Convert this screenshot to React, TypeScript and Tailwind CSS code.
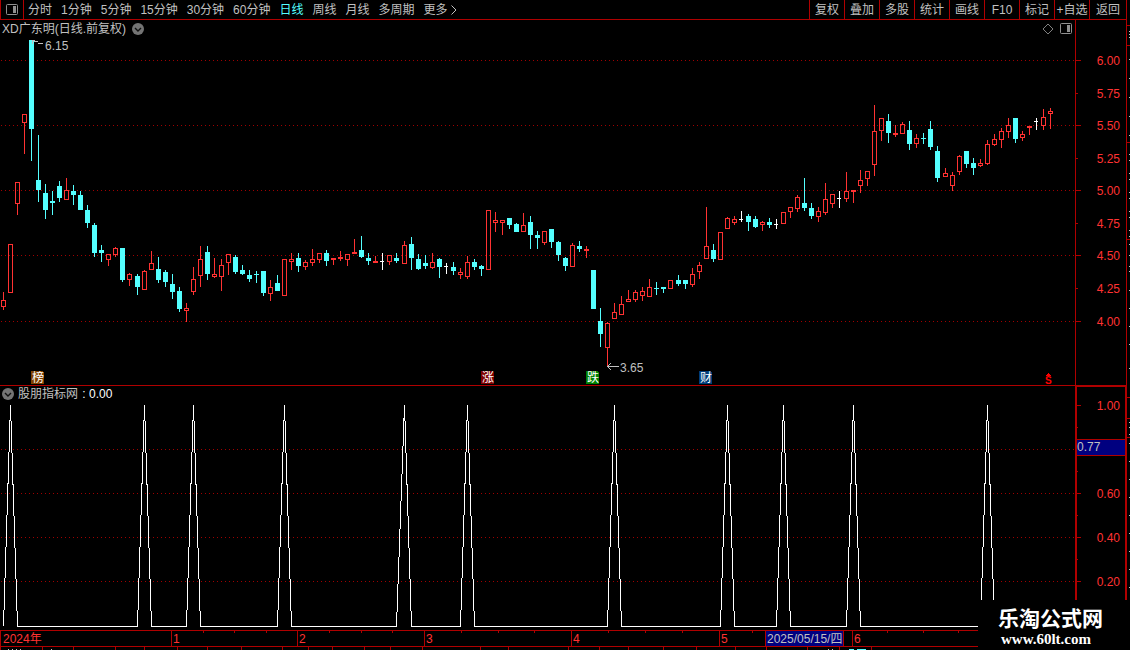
import React, { useState } from 'react';

type Kind = 'up' | 'down' | 'flat';
type Candle = [high: number, top: number, bottom: number, low: number, kind: Kind];

const U: Kind = 'up';
const D: Kind = 'down';
const F: Kind = 'flat';

const PERIODS = ['分时', '1分钟', '5分钟', '15分钟', '30分钟', '60分钟', '日线', '周线', '月线', '多周期'];
const TOOLS = ['复权', '叠加', '多股', '统计', '画线', 'F10', '标记', '+自选', '返回'];

// high, body top, body bottom, low (chart y)
const CANDLES: Candle[] = [
  [292, 300, 307, 310, U], [244, 244, 293, 293, U], [182, 182, 204, 215, U], [114, 114, 123, 154, U],
  [40, 40, 129, 161, D], [135, 180, 190, 202, D], [184, 193, 210, 219, D], [191, 201, 203, 215, D],
  [181, 186, 198, 202, D], [178, 190, 200, 200, U], [185, 191, 195, 205, D], [191, 195, 210, 210, D],
  [205, 210, 223, 228, D], [223, 225, 253, 257, D], [245, 250, 253, 262, D], [254, 254, 260, 266, U],
  [247, 248, 255, 257, U], [248, 248, 280, 282, D], [273, 274, 280, 286, U], [274, 276, 287, 295, D],
  [270, 271, 290, 290, U], [251, 263, 270, 270, U], [257, 269, 280, 283, D], [270, 272, 282, 287, D],
  [274, 284, 292, 299, D], [287, 291, 309, 312, D], [303, 308, 311, 322, U], [267, 279, 292, 295, U],
  [246, 259, 276, 287, U], [246, 252, 274, 280, D], [258, 274, 277, 278, U], [259, 265, 277, 291, U],
  [254, 254, 263, 275, U], [255, 257, 272, 274, D], [265, 270, 274, 275, D], [270, 275, 279, 282, D],
  [271, 274, 275, 283, D], [271, 271, 293, 296, D], [280, 287, 294, 301, U], [275, 283, 291, 291, D],
  [259, 259, 296, 296, U], [253, 259, 262, 270, U], [253, 258, 266, 272, D], [260, 262, 267, 270, U],
  [249, 259, 263, 266, U], [253, 253, 260, 263, U], [250, 253, 261, 266, D], [258, 258, 260, 265, U],
  [251, 257, 259, 261, U], [254, 254, 260, 266, U], [239, 252, 254, 254, U], [236, 250, 257, 258, D],
  [253, 258, 261, 265, D], [256, 261, 263, 263, U], [253, 261, 262, 270, F], [255, 255, 262, 265, U],
  [253, 258, 261, 263, D], [241, 245, 264, 264, U], [237, 244, 258, 270, D], [254, 259, 269, 270, D],
  [255, 263, 266, 269, D], [253, 262, 268, 269, U], [258, 259, 267, 278, D], [263, 266, 267, 274, F],
  [262, 267, 271, 275, D], [268, 272, 275, 279, U], [256, 262, 277, 279, U], [259, 262, 267, 270, D],
  [265, 266, 269, 276, D], [210, 210, 270, 270, U], [212, 220, 223, 232, U], [220, 220, 223, 235, U],
  [218, 218, 225, 229, D], [223, 224, 232, 232, D], [213, 225, 232, 232, U], [216, 222, 235, 249, D],
  [231, 235, 238, 249, D], [231, 231, 243, 245, U], [229, 229, 242, 248, D], [241, 242, 255, 261, D],
  [257, 258, 266, 271, D], [243, 245, 267, 267, U], [241, 246, 249, 252, D], [246, 249, 251, 258, U],
  [270, 270, 309, 309, D], [308, 321, 334, 347, D], [322, 323, 348, 366, U], [303, 312, 319, 319, U],
  [296, 304, 315, 315, U], [290, 299, 302, 302, U], [290, 292, 300, 302, U], [287, 291, 296, 301, U],
  [279, 287, 297, 297, U], [282, 288, 289, 295, D], [287, 287, 289, 293, D], [280, 280, 289, 289, U],
  [275, 280, 284, 286, D], [280, 280, 284, 289, D], [268, 274, 285, 287, U], [262, 265, 272, 279, U],
  [207, 246, 259, 259, U], [244, 250, 259, 262, D], [232, 232, 260, 260, U], [217, 218, 229, 229, U],
  [216, 219, 223, 225, U], [211, 219, 220, 222, F], [214, 216, 222, 231, D], [216, 219, 227, 228, D],
  [221, 222, 225, 231, U], [218, 222, 225, 228, D], [219, 224, 225, 229, F], [212, 212, 224, 224, U],
  [207, 207, 212, 218, U], [195, 197, 209, 212, U], [178, 203, 208, 211, D], [203, 208, 216, 219, D],
  [207, 211, 217, 222, U], [183, 199, 213, 215, U], [194, 194, 204, 208, U], [191, 198, 199, 208, F],
  [172, 191, 199, 202, U], [190, 190, 192, 203, U], [170, 180, 186, 193, U], [171, 171, 179, 186, U],
  [105, 131, 165, 176, U], [118, 118, 131, 141, U], [114, 121, 133, 143, D], [125, 133, 135, 137, U],
  [122, 124, 134, 134, U], [121, 130, 144, 150, D], [134, 138, 144, 148, U], [133, 138, 139, 144, D],
  [121, 129, 147, 150, D], [146, 151, 178, 182, D], [168, 173, 177, 177, U], [172, 175, 186, 191, U],
  [155, 156, 172, 175, U], [151, 151, 164, 168, D], [158, 163, 168, 175, D], [159, 163, 166, 167, U],
  [140, 144, 164, 165, U], [134, 139, 145, 146, U], [128, 131, 140, 148, U], [118, 125, 132, 138, U],
  [118, 118, 139, 143, D], [131, 134, 138, 141, U], [126, 126, 128, 135, U], [118, 121, 122, 130, F],
  [109, 117, 126, 130, U], [108, 111, 114, 129, U],
];

// bars on which the indicator fires
const SIGNALS = [1, 20, 27, 40, 57, 66, 87, 103, 111, 121, 140];

const PRICE_TICKS = [
  { y: 60, label: '6.00' }, { y: 93, label: '5.75' }, { y: 125, label: '5.50' },
  { y: 158, label: '5.25' }, { y: 190, label: '5.00' }, { y: 223, label: '4.75' },
  { y: 255, label: '4.50' }, { y: 288, label: '4.25' }, { y: 321, label: '4.00' },
];

const SIGNAL_TICKS = [
  { y: 405, label: '1.00' }, { y: 449, label: '' }, { y: 493, label: '0.60' },
  { y: 537, label: '0.40' }, { y: 581, label: '0.20' },
];

const BADGES = [
  { x: 31, text: '榜', color: '#804000' },
  { x: 481, text: '涨', color: '#800000' },
  { x: 586, text: '跌', color: '#008000' },
  { x: 699, text: '财', color: '#003c78' },
];

const MONTHS = [
  { x: 171, label: '1' }, { x: 297, label: '2' }, { x: 424, label: '3' },
  { x: 571, label: '4' }, { x: 719, label: '5' }, { x: 852, label: '6' },
];
const WEEKS = [203, 234, 266, 329, 361, 392, 461, 498, 534, 608, 645, 682, 752, 887, 923, 958];

const FOOT_TABS = [
  0, 42, 73, 115, 144, 177, 207, 241, 282, 308, 332, 364, 390, 422, 480, 508, 568, 599, 628, 663,
  696, 735, 766, 807, 839, 871,
];
const FOOT_MARKS = [8, 12, 16, 20, 51, 828, 832];

const EDGE_LINES = [25, 45, 142, 239, 397, 418, 437];
const EDGE_MARKS = [
  31, 34, 37, 59, 78, 97, 116, 135, 154, 160, 173, 179, 192, 198, 211, 217, 230, 236, 244, 255, 266,
  271, 290, 308, 326, 344, 368, 422, 427, 434, 443, 461, 479, 497, 515, 533, 551, 569, 587,
];

const barX = (i: number) => 3 + 7 * i + Math.floor((3 * i + 59) / 115);

const COLORS: Record<Kind, string> = { up: '#ff3232', down: '#54ffff', flat: '#ffffff' };

function CandleBar({ index, candle }: { index: number; candle: Candle }) {
  const [high, top, bottom, low, kind] = candle;
  const x = barX(index);
  const color = COLORS[kind];
  const hollow = kind === 'up' && bottom - top > 2;

  return (
    <g fill={color}>
      <rect x={x} y={high} width={1} height={top - high} />
      <rect x={x} y={bottom} width={1} height={low - bottom} />
      {hollow ? (
        <rect x={x - 1.5} y={top + 0.5} width={4} height={bottom - top - 1} fill="none" stroke={color} />
      ) : (
        <rect x={x - 2} y={top} width={kind === 'flat' ? 4 : 5} height={bottom - top} />
      )}
    </g>
  );
}

function GridLine({ y }: { y: number }) {
  return <line x1="1" x2="100%" y1={y + 0.5} y2={y + 0.5} stroke="#a00000" strokeDasharray="1 3" />;
}

function PanelIcon() {
  return (
    <svg width="13" height="12" viewBox="0 0 13 12" fill="none">
      <rect x="0.5" y="0.5" width="11" height="10" rx="1" stroke="#909090" />
      <rect x="7" y="2" width="3" height="7" fill="#909090" />
    </svg>
  );
}

function CollapseIcon() {
  return (
    <svg width="12" height="12" viewBox="0 0 12 12" fill="none">
      <circle cx="6" cy="6" r="6" fill="#747474" />
      <path d="M3 5l3 3 3-3" stroke="#101010" strokeWidth="1.4" />
    </svg>
  );
}

function Toolbar() {
  const [period, setPeriod] = useState('日线');

  return (
    <header className="flex h-5 items-stretch border-x border-b border-[#b00000] leading-[18px]">
      <button aria-label="侧栏" className="flex w-[22px] items-center justify-center">
        <PanelIcon />
      </button>
      <nav className="flex flex-1 items-stretch gap-[9px] border-l border-[#b00000] pl-1">
        {PERIODS.map((item) => (
          <button
            key={item}
            onClick={() => setPeriod(item)}
            className={item === period ? 'whitespace-nowrap text-[#54ffff]' : 'whitespace-nowrap'}
          >
            {item}
          </button>
        ))}
        <button className="flex items-center gap-[3px] whitespace-nowrap">
          更多
          <svg width="6" height="10" viewBox="0 0 6 10" fill="none">
            <path d="M0.5 0.5L5 5L0.5 9.5" stroke="#c0c0c0" />
          </svg>
        </button>
      </nav>
      <div className="flex items-stretch">
        {TOOLS.map((tool) => (
          <button
            key={tool}
            className="w-[35px] whitespace-nowrap border-l border-[#b00000] text-center last:w-[37px]"
          >
            {tool}
          </button>
        ))}
      </div>
    </header>
  );
}

function PricePanel() {
  return (
    <section className="flex h-[366px]">
      <div className="relative min-w-0 flex-1 border-b border-[#b00000]">
        <svg className="block h-[365px] w-full text-xs" shapeRendering="crispEdges">
          <g transform="translate(0 -20)">
            {PRICE_TICKS.filter((_, i) => i % 2 === 0).map((tick) => (
              <GridLine key={tick.y} y={tick.y} />
            ))}
            {CANDLES.map((candle, i) => (
              <CandleBar key={i} index={i} candle={candle} />
            ))}

            {/* highest and lowest price */}
            <path d="M32 40.5h3M32.5 40v4M34 41.5h4M38 43.5h5" stroke="#c0c0c0" fill="none" />
            <text x="45" y="50" fill="#c0c0c0">6.15</text>
            <path d="M607 366.5h12M608 366l3-3M608 367l3 3" stroke="#c0c0c0" fill="none" />
            <text x="620" y="372" fill="#c0c0c0">3.65</text>

            {BADGES.map((badge) => (
              <g key={badge.text}>
                <path d={`M${badge.x} 371h11l2 2v11h-13z`} fill={badge.color} />
                <text x={badge.x + 1} y="382" fill="#ffffff">{badge.text}</text>
              </g>
            ))}
            <path d="M1048 373h1v1h1v1h1v1h-5v-1h1v-1h1z" fill="#ff0000" />
            <text x="1045" y="384" fill="#ff0000" className="text-[10px] font-bold">S</text>
          </g>
        </svg>
        <div className="absolute inset-x-0 top-0 flex h-[18px] items-center justify-between px-[2px]">
          <div className="flex items-center gap-[6px]">
            <h1 className="whitespace-nowrap">XD广东明(日线.前复权)</h1>
            <button aria-label="展开">
              <CollapseIcon />
            </button>
          </div>
          <div className="flex items-center gap-[6px]">
            <button aria-label="标注">
              <svg width="12" height="12" viewBox="0 0 12 12" fill="none">
                <path d="M6 1l5 5-5 5-5-5z" stroke="#808080" />
              </svg>
            </button>
            <button aria-label="窗口">
              <PanelIcon />
            </button>
          </div>
        </div>
      </div>
      <div className="w-[52px] border-x border-b border-[#b00000]">
        <svg className="block h-[365px] w-full text-xs" shapeRendering="crispEdges">
          <g transform="translate(0 -20)">
            {PRICE_TICKS.map((tick, i) => (
              <g key={tick.label}>
                <rect y={tick.y} width={i % 2 === 0 ? 5 : 2} height="1" fill="#b00000" />
                <text x="44" y={tick.y + 5} textAnchor="end" fill="#ff3232">{tick.label}</text>
              </g>
            ))}
          </g>
        </svg>
      </div>
    </section>
  );
}

function SignalPanel() {
  const points = CANDLES.map((_, i) => `${barX(i) + 0.5},${SIGNALS.includes(i) ? 405 : 626.5}`).join(' ');

  return (
    <section className="flex h-[244px]">
      <div className="relative min-w-0 flex-1">
        <svg className="block h-full w-full" shapeRendering="crispEdges">
          <g transform="translate(0 -386)">
            {SIGNAL_TICKS.slice(1).map((tick) => (
              <GridLine key={tick.y} y={tick.y} />
            ))}
            <polyline points={points} fill="none" stroke="#ffffff" strokeLinejoin="bevel" />
          </g>
        </svg>
        <div className="absolute left-0 top-0 flex h-4 items-center gap-1 pl-[2px]">
          <button aria-label="收起">
            <CollapseIcon />
          </button>
          <h2 className="whitespace-nowrap">
            股朋指标网 <span className="pl-px text-white">: 0.00</span>
          </h2>
        </div>
      </div>
      <div className="relative w-[52px] border-x-2 border-t border-[#b00000]">
        <svg className="block h-full w-full text-xs" shapeRendering="crispEdges">
          <g transform="translate(0 -387)">
            {SIGNAL_TICKS.map((tick) => (
              <g key={tick.y}>
                <rect y={tick.y} width="4" height="1" fill="#b00000" />
                <rect y={tick.y + 22} width="1" height="1" fill="#b00000" />
                <text x="43" y={tick.y + 5} textAnchor="end" fill="#ff3232">{tick.label}</text>
              </g>
            ))}
          </g>
        </svg>
        <output className="absolute inset-x-0 top-[52px] h-[17px] border-y border-[#b00000] bg-[#000080] leading-[15px]">
          0.77
        </output>
      </div>
    </section>
  );
}

function TimeAxis() {
  return (
    <div className="h-[17px] border-y border-l border-[#b00000]">
      <svg className="block h-[15px] w-full text-xs" shapeRendering="crispEdges">
        <g transform="translate(-1 0)">
          <text x="3" y="12" fill="#ff3232">2024年</text>
          {WEEKS.map((x) => (
            <rect key={x} x={x} width="1" height="2" fill="#b00000" />
          ))}
          {MONTHS.map((month) => (
            <g key={month.x}>
              <rect x={month.x} width="1" height="15" fill="#b00000" />
              <text x={month.x + 2} y="12" fill="#ff3232">{month.label}</text>
            </g>
          ))}
          <rect x="765" width="79" height="15" fill="#b00000" />
          <rect x="766" width="77" height="15" fill="#000080" />
          <text x="767" y="12" fill="#c0c0c0">2025/05/15/四</text>
        </g>
      </svg>
    </div>
  );
}

export default function App() {
  return (
    <div className="relative flex min-h-screen bg-black font-['Liberation_Sans','Noto_Sans_CJK_SC',sans-serif] text-xs leading-4 text-[#c0c0c0]">
      <main className="min-w-0 flex-1">
        <Toolbar />
        <PricePanel />
        <SignalPanel />
        <TimeAxis />
        <svg className="block h-[3px] w-full" shapeRendering="crispEdges">
          {FOOT_TABS.map((x) => (
            <rect key={x} x={x} width="1" height="3" fill="#b00000" />
          ))}
          {FOOT_MARKS.map((x) => (
            <rect key={x} x={x} y="2" width="1" height="1" fill="#c0c0c0" />
          ))}
          <rect x="849" y="2" width="5" height="1" fill="#54ffff" />
          <rect x="857" y="2" width="9" height="1" fill="#54ffff" />
        </svg>
      </main>

      {/* edge of the quote panel */}
      <svg className="block h-[650px] w-[3px]" shapeRendering="crispEdges">
        {EDGE_LINES.map((y) => (
          <rect key={y} y={y} width="3" height="1" fill="#b00000" />
        ))}
        {EDGE_MARKS.map((y) => (
          <rect key={y} x="2" y={y} width="1" height="1" fill="#c0c0c0" />
        ))}
      </svg>

      <div className="absolute bottom-0 right-0 h-[50px] w-[152px] bg-black pl-5 pt-[7px] text-white">
        <p className="whitespace-nowrap text-[21px] font-bold leading-6">乐淘公式网</p>
        <p className="pl-[3px] font-['Liberation_Serif',serif] text-[15px] font-bold leading-4">www.60lt.com</p>
      </div>
    </div>
  );
}
